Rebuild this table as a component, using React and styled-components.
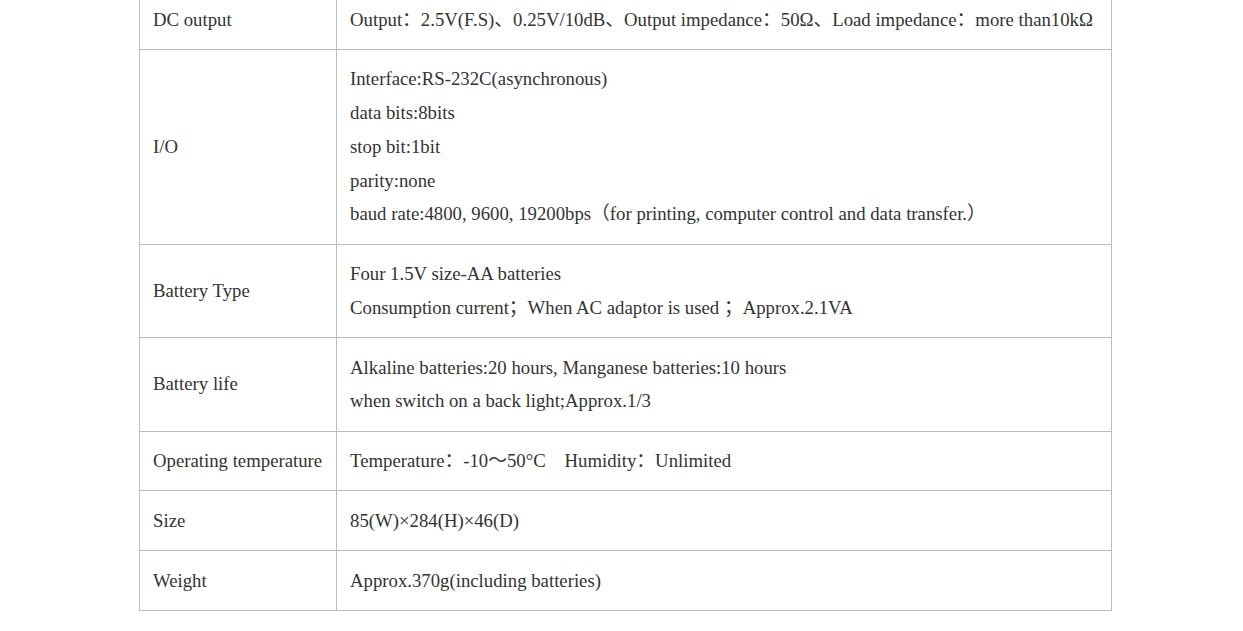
import React from 'react';
import styled, { createGlobalStyle } from 'styled-components';

const GlobalStyle = createGlobalStyle`
  html, body {
    margin: 0;
    padding: 0;
    background: #fff;
  }
`;

const Page = styled.div`
  padding-left: 139px;
  margin-top: -11px;
  font-family: "Liberation Serif", "Noto Sans CJK SC", serif;
  color: #333;
`;

const SpecTable = styled.table`
  width: 973px;
  border-collapse: collapse;
  table-layout: fixed;
  font-size: 18.75px;
  line-height: 33.75px;
`;

const Cell = styled.td`
  border: 1px solid #bdbdbd;
  padding: 12.5px 13px;
  vertical-align: middle;
  width: ${(p) => (p.$label ? '170px' : 'auto')};
  white-space: nowrap;
`;

const Line = styled.div`
  display: block;
`;

const specs = [
  {
    label: 'DC output',
    lines: ['Output：2.5V(F.S)、0.25V/10dB、Output impedance：50Ω、Load impedance：more than10kΩ'],
  },
  {
    label: 'I/O',
    lines: [
      'Interface:RS-232C(asynchronous)',
      'data bits:8bits',
      'stop bit:1bit',
      'parity:none',
      'baud rate:4800, 9600, 19200bps（for printing, computer control and data transfer.）',
    ],
  },
  {
    label: 'Battery Type',
    lines: ['Four 1.5V size-AA batteries', 'Consumption current；When AC adaptor is used ；Approx.2.1VA'],
  },
  {
    label: 'Battery life',
    lines: ['Alkaline batteries:20 hours, Manganese batteries:10 hours', 'when switch on a back light;Approx.1/3'],
  },
  {
    label: 'Operating temperature',
    lines: ['Temperature：-10～50°C\u3000Humidity：Unlimited'],
  },
  { label: 'Size', lines: ['85(W)×284(H)×46(D)'] },
  { label: 'Weight', lines: ['Approx.370g(including batteries)'] },
];

const App = () => (
  <Page>
    <GlobalStyle />
    <SpecTable>
      <tbody>
        {specs.map((row) => (
          <tr key={row.label}>
            <Cell $label>{row.label}</Cell>
            <Cell>
              {row.lines.map((l, i) => (
                <Line key={i}>{l}</Line>
              ))}
            </Cell>
          </tr>
        ))}
      </tbody>
    </SpecTable>
  </Page>
);

export default App;
